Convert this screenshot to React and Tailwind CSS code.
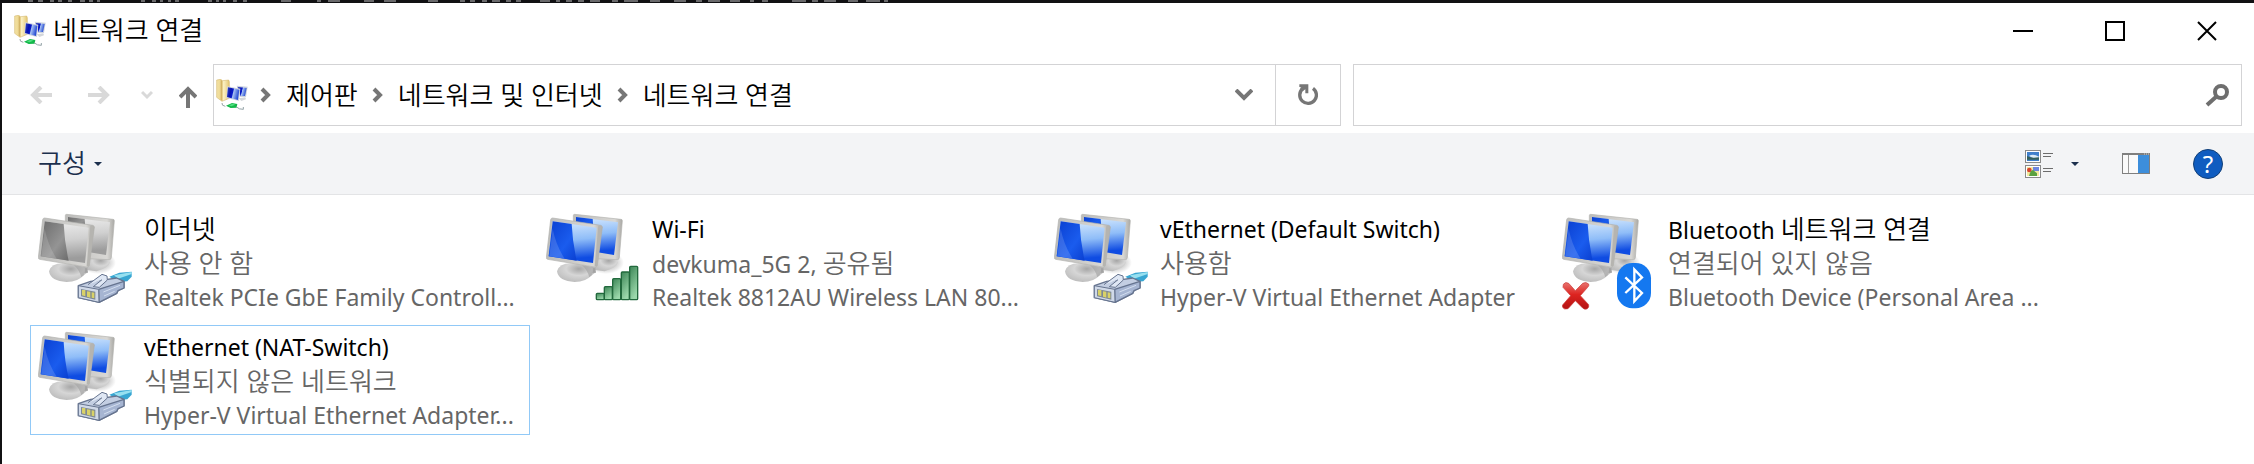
import React from "react";

const FONT = "font-['Noto_Sans','Noto_Sans_CJK_KR',sans-serif]";

const marks = [
  [28, 5], [38, 5], [50, 4], [58, 4], [68, 4], [80, 5], [89, 4], [97, 3], [141, 4], [152, 4], [160, 3],
  [168, 3], [175, 4], [208, 4], [216, 3], [223, 3], [233, 4], [243, 4], [281, 10], [317, 4], [328, 12], [364, 10],
  [384, 12], [428, 10], [460, 5], [470, 5], [482, 5], [492, 8], [506, 5], [516, 5], [540, 10], [556, 4], [566, 6],
  [578, 6], [590, 10], [612, 6], [624, 14], [650, 10], [674, 12], [696, 6], [708, 12], [730, 10], [750, 4],
  [762, 6], [792, 14], [812, 6], [824, 12], [848, 10], [866, 14], [884, 4],
];

function TerminalEdge() {
  return (
    <svg className="block h-[3px] w-full bg-[#111113]" aria-hidden="true">
      {marks.map(([x, w]) => (
        <rect key={x} x={x} y="0" width={w} height="2" fill="#6a6a6c" />
      ))}
    </svg>
  );
}

function FolderNetIcon() {
  return (
    <svg viewBox="0 0 96 96" className="size-8 shrink-0" aria-hidden="true">
      <defs>
        <linearGradient id="fold" x1="0" y1="0" x2="1" y2="0">
          <stop offset="0" stopColor="#f3e3a6" />
          <stop offset="0.4" stopColor="#ecd48a" />
          <stop offset="0.55" stopColor="#fbf1c4" />
          <stop offset="1" stopColor="#e3c672" />
        </linearGradient>
        <linearGradient id="mini" x1="0" y1="0" x2="1" y2="0.25">
          <stop offset="0" stopColor="#3a4dbd" />
          <stop offset="0.35" stopColor="#0713b4" />
          <stop offset="0.52" stopColor="#0a1ccb" />
          <stop offset="0.6" stopColor="#a8c3f3" />
          <stop offset="1" stopColor="#2a4fd4" />
        </linearGradient>
      </defs>
      <path d="M2 3 L14 1 L20 5 L38 3 L40 8 V58 L18 67 L2 55 Z" fill="url(#fold)" stroke="#cfae5c" strokeWidth="1.5" />
      <path d="M14 2 L19 6 V66 L14 62 Z" fill="#c9a658" opacity="0.7" />
      <path d="M62 20 L95 23 L90 54 L72 54 Z" fill="#cdd3de" />
      <path d="M65 24 L92 27 L87 51 L74 51 Z" fill="url(#mini)" />
      <path d="M34 22 L73 29 L69 66 L31 57 Z" fill="#d0d5e0" />
      <path d="M36 25 L70 32 L66 63 L33 54 Z" fill="url(#mini)" />
      <path d="M68 58 L88 55 L90 61 L76 66 Z" fill="#d3d6da" />
      <path d="M18 72 Q16 80 28 82" fill="none" stroke="#9aa4a8" strokeWidth="3" />
      <path d="M30 80 L48 72 L64 75 L62 86 L44 87 Z" fill="#14b84a" />
      <path d="M38 79 L50 74 L58 77 L46 82 Z" fill="#4fe080" />
      <path d="M60 83 Q70 92 82 91 L82 84" fill="none" stroke="#94a3a8" strokeWidth="3" />
    </svg>
  );
}

function Monitors({ gray }) {
  const k = gray ? "g" : "b";
  const dark = gray ? "#6b6b6b" : "#0a3fd0";
  const mid = gray ? "#949494" : "#1a5cee";
  const light = gray ? "#ececec" : "#d3e7fd";
  const low = gray ? "#9c9c9c" : "#0f4ce2";
  return (
    <g>
      <defs>
        <linearGradient id={`glass${k}`} x1="0.4" y1="0" x2="0.5" y2="1">
          <stop offset="0" stopColor={light} />
          <stop offset="0.45" stopColor={gray ? "#d0d0d0" : "#8fbdf8"} />
          <stop offset="0.9" stopColor={low} />
        </linearGradient>
        <linearGradient id={`shade${k}`} x1="0" y1="0" x2="1" y2="1">
          <stop offset="0" stopColor={dark} />
          <stop offset="0.6" stopColor={mid} />
          <stop offset="1" stopColor={dark} />
        </linearGradient>
        <linearGradient id={`frame${k}`} x1="0" y1="0" x2="1" y2="0">
          <stop offset="0" stopColor="#bcbcba" />
          <stop offset="0.85" stopColor="#d9d8d5" />
          <stop offset="1" stopColor="#aaa9a5" />
        </linearGradient>
        <radialGradient id={`foot${k}`} cx="0.6" cy="0.3" r="0.7">
          <stop offset="0" stopColor="#a6a6a6" />
          <stop offset="0.5" stopColor="#d6d6d6" />
          <stop offset="1" stopColor="#bebebe" />
        </radialGradient>
        <radialGradient id={`shadow${k}`}>
          <stop offset="0" stopColor="#8a8a8a" stopOpacity="0.9" />
          <stop offset="1" stopColor="#8a8a8a" stopOpacity="0" />
        </radialGradient>
      </defs>
      <ellipse cx="180" cy="152" rx="54" ry="34" fill={`url(#shadow${k})`} />
      <path d="M148 132 L200 140 L216 150 Q214 166 176 178 L146 174 Z" fill={`url(#foot${k})`} />
      <path d="M86 7 Q82 7 82 11 V60 L150 140 L214 143 Q219 143 220 137 L229 26 Q229 22 225 22 Z" fill={`url(#frame${k})`} stroke="#b4b3b0" strokeWidth="2" />
      <path d="M90 15 L216 31 L204 129 L150 120 L90 60 Z" fill={`url(#glass${k})`} />
      <path d="M90 15 L140 21 L142 50 L90 50 Z" fill={`url(#shade${k})`} />
      <path d="M90 160 L146 168 L150 182 L84 186 Z" fill="#a9a9a9" />
      <path d="M96 156 L142 164 Q142 180 137 190 Q120 210 86 210 Q38 208 33 178 Q40 154 74 154 Z" fill={`url(#foot${k})`} />
      <path d="M108 160 L148 166 L150 180 L130 196 Q124 174 108 160 Z" fill="#a0a0a0" opacity="0.6" />
      <path d="M20 18 Q15 18 14 23 L1 137 Q1 141 5 142 L146 165 Q153 166 154 160 L169 46 Q169 41 164 40 Z" fill={`url(#frame${k})`} stroke="#b1b0ad" strokeWidth="2" />
      <path d="M157 42 L168 43 L154 162 L146 163 Z" fill="#b5b4b0" />
      <path d="M20 28 L152 47 L141 153 L8 133 Z" fill={`url(#glass${k})`} />
      <path d="M20 28 L77 36 Q80 94 92 146 L8 133 Z" fill={`url(#shade${k})`} />
      <path d="M20 50 Q30 100 56 140 L10 132 Z" fill="#ffffff" opacity="0.15" />
    </g>
  );
}

function Plug() {
  return (
    <g stroke="#66748f" strokeWidth="4" strokeLinejoin="round">
      <path d="M214 194 L244 182 L281 179 V194 L268 208 L240 210 Z" fill="#38a6d2" stroke="none" />
      <path d="M228 190 L281 180 V186 L240 200 Z" fill="#97e0f0" stroke="none" />
      <path d="M121 221 L158 208 L204 203 L236 198 L258 208 V228 L240 236 L236 244 L183 271 L121 257 Z" fill="#c3cee2" />
      <path d="M182 232 L258 208 V228 L240 236 L236 244 L183 271 Z" fill="#a6b5d2" />
      <path d="M121 221 L182 232 L183 271 L121 257 Z" fill="#d0d9e8" strokeWidth="3" />
      <path d="M129 231 L172 239 V263 L129 253 Z" fill="#7d8894" stroke="none" />
      <path d="M132 234 H142 V253 L132 250 Z M147 238 L157 239 V257 L147 254 Z M161 241 L169 242 V259 L161 257 Z" fill="#d9d268" stroke="none" />
      <path d="M150 218 L192 187 L207 192 L208 204 L184 226 L166 224 L192 203" fill="#dfe7f4" strokeWidth="3" />
      <path d="M196 240 L246 220 M198 252 L230 238" fill="none" stroke="#d3deef" strokeWidth="3" />
    </g>
  );
}

function Signal() {
  const bars = [[151, 244, 20], [175, 224, 40], [200, 200, 64], [226, 180, 84], [251, 163, 101]];
  return (
    <g>
      <defs>
        <linearGradient id="sig" x1="0" y1="0" x2="0.4" y2="1">
          <stop offset="0" stopColor="#3c8556" />
          <stop offset="1" stopColor="#9bd8ab" />
        </linearGradient>
      </defs>
      {bars.map(([x, y, h]) => (
        <rect key={x} x={x} y={y} width="24" height={h - 1} rx="3" fill="url(#sig)" stroke="#22693d" strokeWidth="4" />
      ))}
    </g>
  );
}

function BluetoothOff() {
  return (
    <g>
      <defs>
        <linearGradient id="cross" x1="0" y1="0" x2="0" y2="1">
          <stop offset="0" stopColor="#e87470" />
          <stop offset="0.45" stopColor="#dd2420" />
          <stop offset="1" stopColor="#b31212" />
        </linearGradient>
      </defs>
      <path d="M4 217 Q10 208 20 214 L40 236 L62 214 Q72 208 80 216 Q82 222 77 226 L55 251 L80 278 Q82 286 76 290 Q68 294 62 288 L40 266 L18 290 Q6 294 2 286 L1 280 L26 251 L3 226 Z" fill="url(#cross)" stroke="#c93a38" strokeWidth="2" />
      <rect x="165" y="153" width="102" height="136" rx="46" fill="#1478f0" />
      <path d="M190 196 L240 243 L217 268 V172 L240 196 L190 243" fill="none" stroke="#ffffff" strokeWidth="7" />
    </g>
  );
}

function AdapterIcon({ kind }) {
  return (
    <svg viewBox="0 0 282 294" className="h-[98px] w-[94px] shrink-0" aria-hidden="true">
      <Monitors gray={kind === "disabled"} />
      {(kind === "disabled" || kind === "ethernet") && <Plug />}
      {kind === "wifi" && <Signal />}
      {kind === "bluetooth" && <BluetoothOff />}
    </svg>
  );
}

/* Hangul is set a little larger than Latin so both scripts look even. */
function Mixed({ text }) {
  return text.split(/([\uac00-\ud7a3]+(?: [\uac00-\ud7a3]+)*)/).map((part, i) =>
    /[\uac00-\ud7a3]/.test(part) ? (
      <span key={i} className="text-[26px] font-[350]">{part}</span>
    ) : (
      <React.Fragment key={i}>{part}</React.Fragment>
    )
  );
}

const adapters = [
  { kind: "disabled", name: "이더넷", status: "사용 안 함", device: "Realtek PCIe GbE Family Controll..." },
  { kind: "wifi", name: "Wi-Fi", status: "devkuma_5G 2, 공유됨", device: "Realtek 8812AU Wireless LAN 80..." },
  { kind: "ethernet", name: "vEthernet (Default Switch)", status: "사용함", device: "Hyper-V Virtual Ethernet Adapter" },
  { kind: "bluetooth", name: "Bluetooth 네트워크 연결", status: "연결되어 있지 않음", device: "Bluetooth Device (Personal Area ..." },
  { kind: "ethernet", name: "vEthernet (NAT-Switch)", status: "식별되지 않은 네트워크", device: "Hyper-V Virtual Ethernet Adapter...", selected: true },
];

function Adapter({ item }) {
  return (
    <li>
      <button
        type="button"
        className={`flex h-[110px] w-full items-start gap-3 border pt-1 pl-[7px] text-left ${item.selected ? "border-[#91c9f7]" : "border-transparent"}`}
      >
        <AdapterIcon kind={item.kind} />
        <span className="flex min-w-0 flex-col text-[23px] leading-[34px] whitespace-nowrap text-[#666666]">
          <span className="h-[34px] text-black"><Mixed text={item.name} /></span>
          <span className="h-[34px]"><Mixed text={item.status} /></span>
          <span className="h-[34px]">{item.device}</span>
        </span>
      </button>
    </li>
  );
}

function Crumb({ children }) {
  return (
    <li className="flex items-center">
      <svg viewBox="0 0 12 16" className="mx-3 h-4 w-3" fill="none" stroke="#767676" strokeWidth="4" aria-hidden="true">
        <path d="M2 2 L8 8 L2 14" />
      </svg>
      <a href="#" className="px-0.5 text-[26px] font-[350] text-black">{children}</a>
    </li>
  );
}

function Caret() {
  return (
    <svg viewBox="0 0 8 4" className="h-1 w-2" fill="#1b2f4d" aria-hidden="true">
      <path d="M0 0 H8 L4 4 Z" />
    </svg>
  );
}

function TitleBar() {
  const btn = "flex h-full w-[92px] items-center justify-center";
  return (
    <header className="flex h-[55px] items-center pr-px pl-3">
      <FolderNetIcon />
      <h1 className="ml-[7px] flex-1 text-[26px] font-[350] text-black">네트워크 연결</h1>
      <button type="button" aria-label="최소화" className={btn}>
        <svg viewBox="0 0 20 20" className="size-5"><path d="M0 10 H20" stroke="#000" strokeWidth="2" /></svg>
      </button>
      <button type="button" aria-label="최대화" className={btn}>
        <svg viewBox="0 0 20 20" className="size-5"><path d="M1 1 H19 V19 H1 Z" fill="none" stroke="#000" strokeWidth="2" /></svg>
      </button>
      <button type="button" aria-label="닫기" className={btn}>
        <svg viewBox="0 0 20 20" className="size-5"><path d="M1 1 L19 19 M19 1 L1 19" stroke="#000" strokeWidth="2" /></svg>
      </button>
    </header>
  );
}

function AddressRow() {
  return (
    <div className="flex items-center pt-[6px] pr-3 pb-[7px] pl-7">
      <nav className="flex w-[183px] shrink-0 items-center">
        <button type="button" aria-label="뒤로">
          <svg viewBox="0 0 22 18" className="h-[18px] w-[22px]" fill="none" stroke="#d9d9d9" strokeWidth="4"><path d="M11 1 L3 9 L11 17 M3 9 H22" /></svg>
        </button>
        <button type="button" aria-label="앞으로" className="ml-9">
          <svg viewBox="0 0 22 18" className="h-[18px] w-[22px]" fill="none" stroke="#d9d9d9" strokeWidth="4"><path d="M11 1 L19 9 L11 17 M19 9 H0" /></svg>
        </button>
        <button type="button" aria-label="최근 위치" className="ml-[31px]">
          <svg viewBox="0 0 12 10" className="h-[10px] w-3" fill="none" stroke="#d9d9d9" strokeWidth="3"><path d="M1 2 L6 7 L11 2" /></svg>
        </button>
        <button type="button" aria-label="위로" className="mt-1 ml-[26px]">
          <svg viewBox="0 0 18 22" className="h-[22px] w-[18px]" fill="none" stroke="#767676" strokeWidth="4"><path d="M1 11 L9 3 L17 11 M9 3 V22" /></svg>
        </button>
      </nav>
      <div className="flex h-[62px] min-w-0 flex-[9] items-center border border-[#d3d3d5]">
        <div className="pl-[2px]"><FolderNetIcon /></div>
        <ol className="flex flex-1 items-center whitespace-nowrap">
          <Crumb>제어판</Crumb>
          <Crumb>네트워크 및 인터넷</Crumb>
          <Crumb>네트워크 연결</Crumb>
        </ol>
        <button type="button" aria-label="이전 위치" className="flex w-[62px] justify-center">
          <svg viewBox="0 0 18 12" className="h-3 w-[18px]" fill="none" stroke="#767676" strokeWidth="4"><path d="M1 1 L9 9 L17 1" /></svg>
        </button>
        <button type="button" aria-label="새로 고침" className="flex h-full w-[65px] items-center justify-center border-l border-[#d3d3d5]">
          <svg viewBox="0 0 60 66" className="h-[22px] w-5" aria-hidden="true">
            <path d="M45 13 A25 25 0 1 1 13 15" fill="none" stroke="#767676" strokeWidth="10" />
            <path d="M4 1 H31 V28 H22 V16 L14 22 L6 12 L10 9 H4 Z" fill="#767676" />
          </svg>
        </button>
      </div>
      <form role="search" className="ml-3 flex h-[62px] min-w-0 flex-[7] items-center border border-[#d3d3d5] pr-3">
        <input type="text" aria-label="네트워크 연결 검색" className="h-full min-w-0 flex-1 pl-3 text-[26px] outline-none" />
        <button type="submit" aria-label="검색">
          <svg viewBox="0 0 24 24" className="size-6" fill="none" stroke="#6e6e6e" aria-hidden="true">
            <circle cx="16" cy="9" r="6" strokeWidth="4" />
            <path d="M12 13 L2 22" strokeWidth="4" />
          </svg>
        </button>
      </form>
    </div>
  );
}

function Toolbar() {
  return (
    <div className="flex h-[62px] items-center border-b border-[#e3e4e6] bg-[#f3f4f6] pr-[31px] pl-9">
      <button type="button" className="flex items-center gap-2 text-[26px] font-[350] text-[#1b2f4d]">
        구성 <Caret />
      </button>
      <div className="flex-1" />
      <button type="button" aria-label="보기 변경" className="flex items-center gap-[18px]">
        <svg viewBox="0 0 84 84" className="size-7" aria-hidden="true">
          <g fill="#fff" stroke="#8a8a8a" strokeWidth="3">
            <rect x="1.500" y="1.500" width="45" height="36" />
            <rect x="1.500" y="46.500" width="45" height="36" />
          </g>
          <rect x="6" y="6" width="36" height="27" fill="#3f7fcb" />
          <path d="M12 17 Q26 10 42 20 V24 L22 24 Z" fill="#dcebf6" />
          <path d="M6 18 Q18 26 42 22 V29 H6 Z" fill="#35605c" />
          <rect x="6" y="51" width="36" height="27" fill="#f3e9a0" />
          <rect x="24" y="51" width="18" height="12" fill="#6d86e0" />
          <circle cx="13" cy="60" r="7" fill="#d9442e" />
          <path d="M12 78 Q16 60 24 60 L36 70 V78 Z" fill="#5aa13f" />
          <path d="M54 10.500 H84 M54 19.500 H78 M54 55.500 H84 M54 64.500 H78" stroke="#6c6c6c" strokeWidth="3" />
        </svg>
        <Caret />
      </button>
      <button type="button" aria-label="미리 보기 창" className="ml-[43px]">
        <svg viewBox="0 0 84 63" className="h-[21px] w-7" aria-hidden="true">
          <rect x="1.500" y="1.500" width="81" height="60" fill="#fafafa" stroke="#7f7f7f" strokeWidth="3" />
          <path d="M0 3 H84" stroke="#7f7f7f" strokeWidth="6" />
          <path d="M19.500 6 V60" stroke="#9a9a9a" strokeWidth="3" />
          <rect x="48" y="6" width="33" height="54" fill="#3d8edb" />
          <path d="M66 3 H69 M72 3 H75 M78 3 H81" stroke="#fff" strokeWidth="2" />
        </svg>
      </button>
      <button type="button" aria-label="도움말" className="ml-[43px] flex size-[30px] items-center justify-center rounded-full border border-[#123f77] bg-[#0f5cc0] text-2xl leading-none text-white">
        ?
      </button>
    </div>
  );
}

export default function App() {
  return (
    <div className={`flex min-h-screen flex-col bg-[#111113] ${FONT}`}>
      <TerminalEdge />
      <div className="ml-[2px] flex flex-1 flex-col bg-white">
        <TitleBar />
        <AddressRow />
        <Toolbar />
        <main className="flex-1 pt-3 pl-7">
          <ul className="grid grid-cols-[repeat(auto-fill,500px)] gap-2">
            {adapters.map((item) => (
              <Adapter key={item.name} item={item} />
            ))}
          </ul>
        </main>
      </div>
    </div>
  );
}
